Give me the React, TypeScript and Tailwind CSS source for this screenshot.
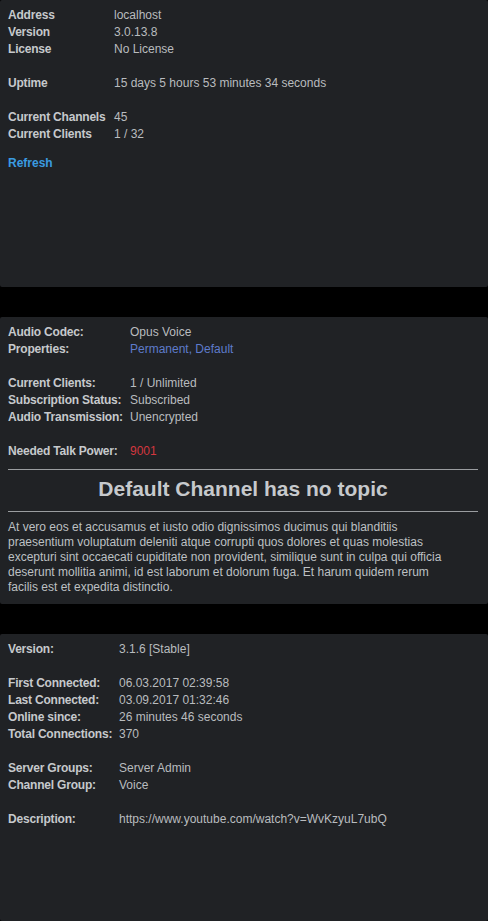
import React from "react";

type Row = { l?: string; v?: React.ReactNode; vc?: string };

const Grid = ({ rows, col }: { rows: Row[]; col: string }) => (
  <div className={`grid ${col} leading-[17px] text-[12px]`}>
    {rows.map((r, i) =>
      r.l === undefined ? (
        <div key={i} className="col-span-2 h-[17px]" />
      ) : (
        <React.Fragment key={i}>
          <div className="font-bold text-[#c6c9cc] whitespace-nowrap tracking-[-0.2px]">{r.l}</div>
          <div className={`whitespace-nowrap ${r.vc ?? "text-[#b9bcbf]"}`}>{r.v}</div>
        </React.Fragment>
      )
    )}
  </div>
);

export default function App() {
  const font = { fontFamily: '"Liberation Sans", Arial, sans-serif' };
  return (
    <div className="bg-black w-[488px] h-[921px] flex flex-col gap-[30px]" style={font}>
      <div className="h-[287px] bg-[#202225] rounded-[2px] pl-2 pt-[7px]">
        <Grid
          col="grid-cols-[106px_1fr]"
          rows={[
            { l: "Address", v: "localhost" },
            { l: "Version", v: "3.0.13.8" },
            { l: "License", v: "No License" },
            {},
            { l: "Uptime", v: "15 days 5 hours 53 minutes 34 seconds" },
            {},
            { l: "Current Channels", v: "45" },
            { l: "Current Clients", v: "1 / 32" },
          ]}
        />
        <div className="mt-[12px] text-[12px] leading-[17px] font-bold text-[#3a9be0]">Refresh</div>
      </div>

      <div className="h-[287px] bg-[#202225] rounded-[2px] pl-2 pr-[10px] pt-[7px]">
        <Grid
          col="grid-cols-[122px_1fr]"
          rows={[
            { l: "Audio Codec:", v: "Opus Voice" },
            { l: "Properties:", v: "Permanent, Default", vc: "text-[#5e7bcb]" },
            {},
            { l: "Current Clients:", v: "1 / Unlimited" },
            { l: "Subscription Status:", v: "Subscribed" },
            { l: "Audio Transmission:", v: "Unencrypted" },
            {},
            { l: "Needed Talk Power:", v: "9001", vc: "text-[#d3373f]" },
          ]}
        />
        <div className="mt-[9px] h-px bg-[#9a9da0]" />
        <div className="mt-[7px] mb-[10px] text-center text-[21px] leading-[24px] font-bold text-[#c6c9cc]">
          Default Channel has no topic
        </div>
        <div className="h-px bg-[#9a9da0]" />
        <p className="mt-[8px] text-[12px] leading-[15px] text-[#bdc0c3] whitespace-nowrap">
          At vero eos et accusamus et iusto odio dignissimos ducimus qui blanditiis
          <br />
          praesentium voluptatum deleniti atque corrupti quos dolores et quas molestias
          <br />
          excepturi sint occaecati cupiditate non provident, similique sunt in culpa qui officia
          <br />
          deserunt mollitia animi, id est laborum et dolorum fuga. Et harum quidem rerum
          <br />
          facilis est et expedita distinctio.
        </p>
      </div>

      <div className="h-[287px] bg-[#202225] rounded-[2px] pl-2 pt-[7px]">
        <Grid
          col="grid-cols-[111px_1fr]"
          rows={[
            { l: "Version:", v: "3.1.6 [Stable]" },
            {},
            { l: "First Connected:", v: "06.03.2017 02:39:58" },
            { l: "Last Connected:", v: "03.09.2017 01:32:46" },
            { l: "Online since:", v: "26 minutes 46 seconds" },
            { l: "Total Connections:", v: "370" },
            {},
            { l: "Server Groups:", v: "Server Admin" },
            { l: "Channel Group:", v: "Voice" },
            {},
            { l: "Description:", v: "https://www.youtube.com/watch?v=WvKzyuL7ubQ" },
          ]}
        />
      </div>
    </div>
  );
}
